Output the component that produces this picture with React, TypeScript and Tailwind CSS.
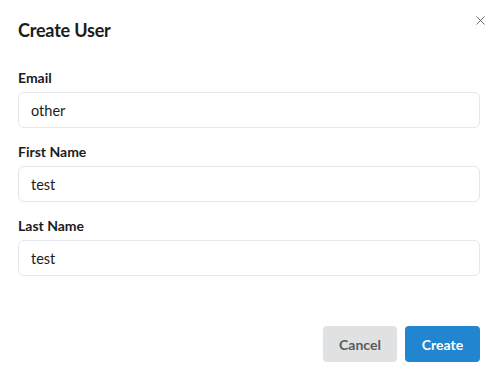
import { X } from "lucide-react";

const FIELDS = [
  { label: "Email", value: "other" },
  { label: "First Name", value: "test" },
  { label: "Last Name", value: "test" },
];

export default function App() {
  return (
    <div className="relative h-[380px] w-[500px] bg-white font-['Lato',sans-serif] text-[#1b1c1d]">
      <button className="absolute right-[12px] top-[13px] text-[#555]">
        <X size={15} strokeWidth={1.4} />
      </button>

      <div className="pl-[18px] pr-[20px] pt-[18px]">
        <h2 className="text-[18px] font-bold leading-[24px] tracking-[-0.2px]">Create User</h2>

        <form className="mt-[27px] flex flex-col gap-[15px]">
          {FIELDS.map((f) => (
            <div key={f.label}>
              <label className="mb-[5px] block text-[14px] font-bold leading-[18px]">{f.label}</label>
              <input
                readOnly
                value={f.value}
                className="h-[36px] w-full rounded-[6px] border border-[#e3e7ee] px-[12px] text-[14.5px] text-[#1b1c1d] outline-none"
              />
            </div>
          ))}
        </form>

        <div className="mt-[50px] flex justify-end gap-[8px]">
          <button className="h-[36px] w-[74px] rounded-[4px] bg-[#e0e1e2] text-[14px] font-bold text-[#5a5a5a]">
            Cancel
          </button>
          <button className="h-[36px] w-[75px] rounded-[4px] bg-[#2185d0] text-[14px] font-bold text-white">
            Create
          </button>
        </div>
      </div>
    </div>
  );
}
